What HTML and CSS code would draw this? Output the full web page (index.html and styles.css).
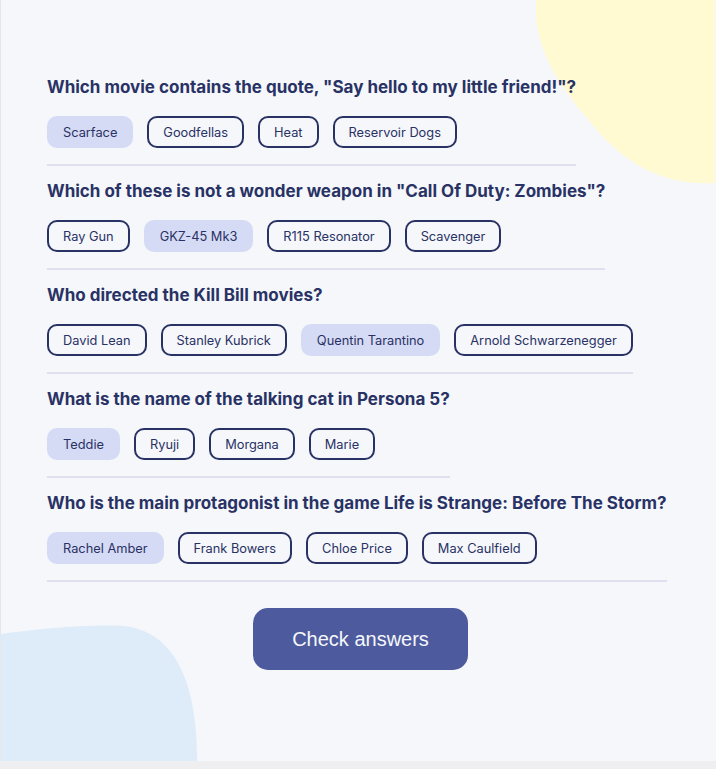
FILE: index.html
```html
<!DOCTYPE html>
<html lang="en">
<head>
<meta charset="utf-8">
<title>Quizzical</title>
<link rel="stylesheet" href="styles.css">
</head>
<body>
<main class="app">
  <svg class="blob blob-yellow" width="180" height="190" viewBox="537 0 180 190" aria-hidden="true">
    <path d="M537 0 H716 V183 C 662 186, 622 162, 588 118 C 556 80, 534 44, 537 0 Z" fill="#FFFAD1"/>
  </svg>
  <svg class="blob blob-blue" width="200" height="140" viewBox="0 621 200 140" aria-hidden="true">
    <path d="M0 634 C 40 629, 88 624, 124 626 C 174 632, 197 680, 197 761 H0 Z" fill="#DEEBF8"/>
  </svg>
  <section class="quiz">
    <div class="question">
      <h2>Which movie contains the quote, "Say hello to my little friend!"?</h2>
      <div class="options">
        <span class="opt selected">Scarface</span>
        <span class="opt">Goodfellas</span>
        <span class="opt">Heat</span>
        <span class="opt">Reservoir Dogs</span>
      </div>
    </div>
    <div class="question">
      <h2>Which of these is not a wonder weapon in "Call Of Duty: Zombies"?</h2>
      <div class="options">
        <span class="opt">Ray Gun</span>
        <span class="opt selected">GKZ-45 Mk3</span>
        <span class="opt">R115 Resonator</span>
        <span class="opt">Scavenger</span>
      </div>
    </div>
    <div class="question">
      <h2>Who directed the Kill Bill movies?</h2>
      <div class="options">
        <span class="opt">David Lean</span>
        <span class="opt">Stanley Kubrick</span>
        <span class="opt selected">Quentin Tarantino</span>
        <span class="opt">Arnold Schwarzenegger</span>
      </div>
    </div>
    <div class="question">
      <h2>What is the name of the talking cat in Persona 5?</h2>
      <div class="options">
        <span class="opt selected">Teddie</span>
        <span class="opt">Ryuji</span>
        <span class="opt">Morgana</span>
        <span class="opt">Marie</span>
      </div>
    </div>
    <div class="question">
      <h2>Who is the main protagonist in the game Life is Strange: Before The Storm?</h2>
      <div class="options">
        <span class="opt selected">Rachel Amber</span>
        <span class="opt">Frank Bowers</span>
        <span class="opt">Chloe Price</span>
        <span class="opt">Max Caulfield</span>
      </div>
    </div>
    <div class="actions">
      <button class="check">Check answers</button>
    </div>
  </section>
</main>
</body>
</html>
```
FILE: styles.css
```css
html, body {
  margin: 0;
  padding: 0;
}
body {
  background: #EFEFF1;
  font-family: Inter, "Noto Sans", sans-serif;
  color: #293264;
}
.app {
  position: relative;
  height: 761px;
  background: #F5F7FB;
  border-left: 1px solid #E6E7EC;
  overflow: hidden;
  box-sizing: border-box;
}
.blob {
  position: absolute;
  display: block;
}
.blob-yellow {
  top: 0;
  right: 0;
}
.blob-blue {
  left: -1px;
  bottom: 0;
}
.quiz {
  position: relative;
  padding: 76px 0 0 46px;
  display: flex;
  flex-direction: column;
  align-items: flex-start;
}
.question {
  width: fit-content;
  padding-bottom: 16px;
  border-bottom: 2px solid #DEE0EE;
  margin-bottom: 14px;
}
.question h2 {
  margin: 0 0 18px;
  font-size: 17px;
  line-height: 22px;
  font-weight: 700;
  color: #293264;
}
.options {
  display: flex;
  gap: 14px;
}
.opt {
  display: inline-flex;
  align-items: center;
  height: 32px;
  box-sizing: border-box;
  padding: 0 14px;
  border: 2px solid #293264;
  border-radius: 10px;
  font-size: 12.8px;
  color: #293264;
  white-space: nowrap;
}
.opt.selected {
  background: #D6DBF5;
  border-color: #D6DBF5;
}
.actions {
  align-self: stretch;
  display: flex;
  justify-content: center;
  padding-top: 12px;
  margin-left: -42px;
}
.check {
  font-family: "Liberation Sans", Arial, sans-serif;
  font-size: 20px;
  line-height: 24px;
  padding: 19px 39px;
  border: none;
  border-radius: 15px;
  background: #4D5B9E;
  color: #F5F7FB;
}
```
